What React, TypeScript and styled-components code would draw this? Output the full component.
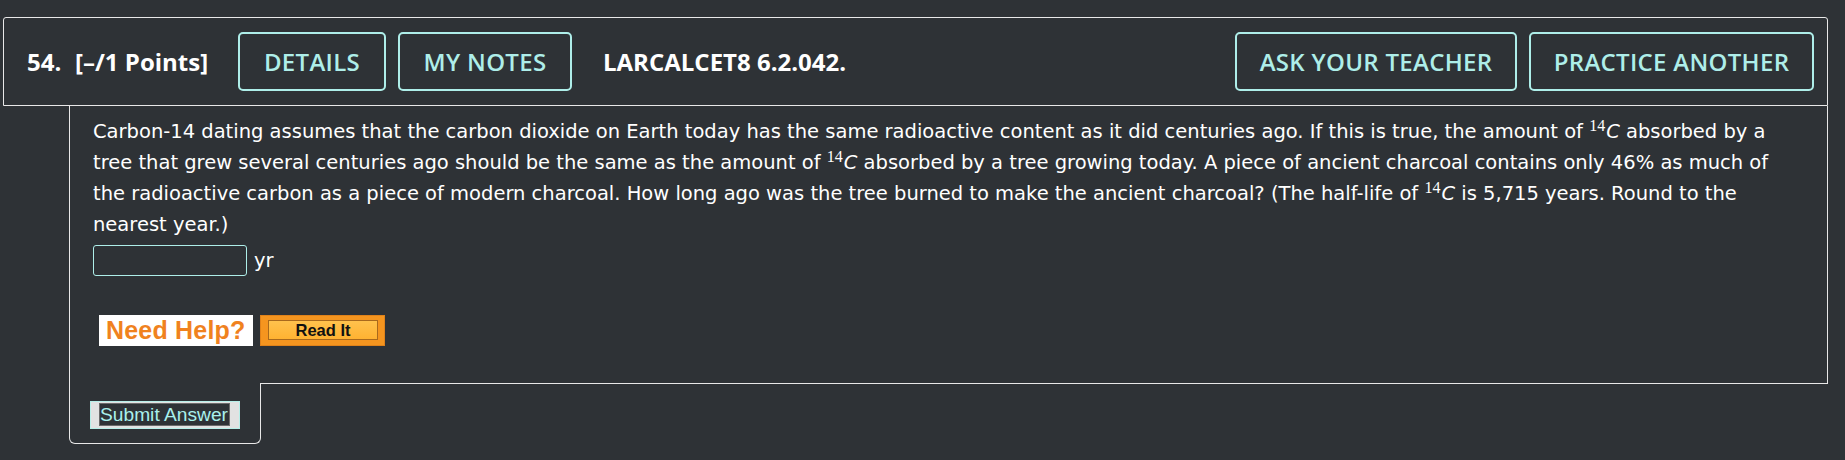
import React from "react";
import styled, { createGlobalStyle } from "styled-components";

const GlobalStyle = createGlobalStyle`
  html, body {
    margin: 0;
    padding: 0;
    background: #2e3236;
  }
  * { box-sizing: border-box; }
`;

const Page = styled.div`
  padding: 17px 17px 0 3px;
  height: 460px;
  background: #2e3236;
`;

const Header = styled.div`
  display: flex;
  align-items: center;
  border: 1px solid #e8e8e8;
  border-radius: 3px 3px 0 0;
  padding: 14px 13px 14px 23px;
  font-family: "Open Sans", "Liberation Sans", sans-serif;
  font-size: 24px;
  color: #ffffff;
`;

const Number = styled.span`
  font-weight: 700;
  width: 48px;
`;

const Points = styled.span`
  font-weight: 700;
  width: 163px;
`;

const Code = styled.span`
  font-weight: 700;
  margin-left: 31px;
  flex: 1;
`;

const Group = styled.div`
  display: flex;
  gap: 12px;
`;

const OutlineButton = styled.button<{ $w: number }>`
  width: ${(p) => p.$w}px;
  height: 59px;
  padding: 0;
  background: transparent;
  border: 2px solid #aeeee9;
  border-radius: 5px;
  color: #aeeee9;
  font-family: "Open Sans", "Liberation Sans", sans-serif;
  font-size: 24px;
  font-weight: 600;
  letter-spacing: 0.3px;
  text-align: center;
  white-space: nowrap;
  cursor: pointer;
`;

const Body = styled.div`
  margin-left: 66px;
  border: 1px solid #e8e8e8;
  border-top: none;
  padding: 10px 24px 37px 23px;
  font-family: "DejaVu Sans", Verdana, sans-serif;
  font-size: 19.5px;
  line-height: 31px;
  color: #ffffff;
`;

const Question = styled.p`
  margin: 0;
`;

const Sup = styled.sup`
  font-family: "Liberation Serif", serif;
  font-size: 16px;
  line-height: 0;
  vertical-align: 7px;
  margin-right: 1px;
`;

const Var = styled.i`
  font-style: italic;
`;

const AnswerRow = styled.div`
  display: flex;
  align-items: center;
  gap: 7px;
  margin-top: 5px;
`;

const AnswerInput = styled.input`
  width: 154px;
  height: 31px;
  background: #2e3236;
  border: 1px solid #aeeee9;
  border-radius: 3px;
  color: #ffffff;
  font-size: 18px;
`;

const HelpRow = styled.div`
  display: flex;
  gap: 7px;
  margin: 39px 0 0 6px;
`;

const NeedHelp = styled.div`
  width: 154px;
  height: 31px;
  background: #ffffff;
  color: #f0821e;
  font-family: "Liberation Sans", Arial, sans-serif;
  font-weight: 700;
  font-size: 25px;
  line-height: 31px;
  padding-left: 7px;
  letter-spacing: 0.2px;
`;

const ReadIt = styled.button`
  width: 125px;
  height: 31px;
  padding: 4px 6px 5px 7px;
  background: #f5951f;
  border: 1px solid #e0821a;
  display: flex;
  cursor: pointer;
`;

const ReadItInner = styled.span`
  flex: 1;
  background: linear-gradient(#ffc24d, #ffb232);
  border: 1px solid #a9691c;
  color: #111111;
  font-family: "Liberation Sans", Arial, sans-serif;
  font-weight: 700;
  font-size: 16.5px;
  line-height: 19px;
  text-align: center;
`;

const SubmitTab = styled.div`
  margin-left: 66px;
  margin-top: -1px;
  width: 192px;
  height: 61px;
  background: #2e3236;
  border: 1px solid #e8e8e8;
  border-top: none;
  border-radius: 0 0 6px 6px;
  padding: 18px 0 0 20px;
`;

const SubmitButton = styled.button`
  width: 150px;
  height: 28px;
  padding: 1px 9px 2px 8px;
  background: #e2e2e2;
  border: 1px solid #b7efe9;
  display: flex;
  cursor: pointer;
`;

const SubmitLabel = styled.span`
  flex: 1;
  background: #2e3236;
  border: 1px solid #6b6b6b;
  color: #a9f0ec;
  font-family: "Liberation Sans", Arial, sans-serif;
  font-size: 19.2px;
  line-height: 21px;
  text-align: left;
  white-space: nowrap;
  overflow: visible;
`;

const Unit = styled.span``;

function C14() {
  return (
    <>
      <Sup>14</Sup>
      <Var>C</Var>
    </>
  );
}

export default function App() {
  return (
    <>
      <GlobalStyle />
      <Page>
        <Header>
          <Number>54.</Number>
          <Points>[–/1 Points]</Points>
          <Group>
            <OutlineButton $w={148}>DETAILS</OutlineButton>
            <OutlineButton $w={174}>MY NOTES</OutlineButton>
          </Group>
          <Code>LARCALCET8 6.2.042.</Code>
          <Group>
            <OutlineButton $w={282}>ASK YOUR TEACHER</OutlineButton>
            <OutlineButton $w={285}>PRACTICE ANOTHER</OutlineButton>
          </Group>
        </Header>
        <Body>
          <Question>
            Carbon-14 dating assumes that the carbon dioxide on Earth today has the same radioactive content as it did centuries ago. If this is true, the amount of <C14 /> absorbed by a tree that grew several centuries ago should be the same as the amount of <C14 /> absorbed by a tree growing today. A piece of ancient charcoal contains only 46% as much of the radioactive carbon as a piece of modern charcoal. How long ago was the tree burned to make the ancient charcoal? (The half-life of <C14 /> is 5,715 years. Round to the nearest year.)
          </Question>
          <AnswerRow>
            <AnswerInput type="text" />
            <Unit>yr</Unit>
          </AnswerRow>
          <HelpRow>
            <NeedHelp>Need Help?</NeedHelp>
            <ReadIt>
              <ReadItInner>Read It</ReadItInner>
            </ReadIt>
          </HelpRow>
        </Body>
        <SubmitTab>
          <SubmitButton>
            <SubmitLabel>Submit Answer</SubmitLabel>
          </SubmitButton>
        </SubmitTab>
      </Page>
    </>
  );
}
